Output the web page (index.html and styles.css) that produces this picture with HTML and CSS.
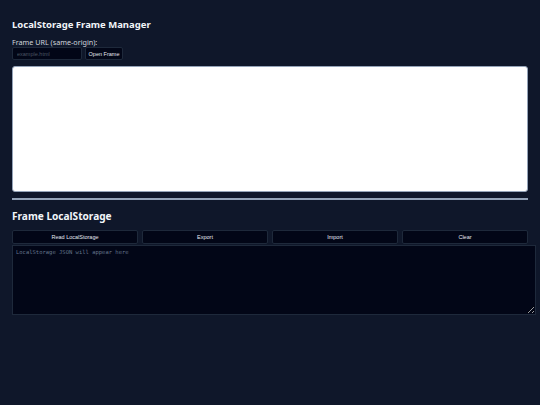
FILE: index.html
```html
<!DOCTYPE html>
<html>
<head>
<meta charset="utf-8">
<link rel="stylesheet" href="styles.css">
</head>
<body>
<div class="page">
  <h1 class="title">LocalStorage Frame Manager</h1>
  <label class="label" for="url">Frame URL (same-origin):</label>
  <div class="url-row">
    <input id="url" class="url-input" type="text" placeholder="example.html">
    <button class="btn btn-open">Open Frame</button>
  </div>
  <div class="frame"></div>
  <hr class="divider">
  <h2 class="subtitle">Frame LocalStorage</h2>
  <div class="actions">
    <button class="btn btn-action">Read LocalStorage</button>
    <button class="btn btn-action">Export</button>
    <button class="btn btn-action">Import</button>
    <button class="btn btn-action">Clear</button>
  </div>
  <textarea class="output" placeholder="LocalStorage JSON will appear here"></textarea>
</div>
</body>
</html>
```
FILE: styles.css
```css
html, body {
  margin: 0;
  padding: 0;
  background: #0f172a;
  height: 100%;
}
body {
  font-family: "Noto Sans", sans-serif;
  color: #e2e8f0;
}
.page {
  padding: 12px 12px 0 12px;
  display: flex;
  flex-direction: column;
}
.title {
  margin: 5px 0 0 0;
  font-size: 9.5px;
  font-weight: 700;
  line-height: 15px;
  color: #f1f5f9;
}
.label {
  margin-top: 5px;
  font-size: 7.2px;
  line-height: 10px;
  color: #d1d5db;
}
.url-row {
  display: flex;
  gap: 3px;
  margin-top: 0;
}
.url-input {
  box-sizing: border-box;
  width: 70px;
  height: 13px;
  padding: 0 4px;
  margin: 0;
  background: #020617;
  border: 1px solid #1e293b;
  border-radius: 2px;
  color: #e2e8f0;
  font-family: "Liberation Sans", Arial, sans-serif;
  font-size: 5.5px;
  outline: none;
}
.url-input::placeholder {
  color: #4b5563;
}
.btn {
  box-sizing: border-box;
  margin: 0;
  background: #020617;
  border: 1px solid #1e293b;
  border-radius: 2px;
  color: #e2e8f0;
  font-family: "Liberation Sans", Arial, sans-serif;
  font-size: 5.5px;
  padding: 0;
  cursor: pointer;
}
.btn-open {
  width: 38px;
  height: 13px;
}
.frame {
  margin-top: 6px;
  height: 126px;
  background: #ffffff;
  border: 1px solid #94a3b8;
  border-radius: 3px;
  box-sizing: border-box;
}
.divider {
  margin: 6px 0 0 0;
  border: none;
  height: 2px;
  background: #94a3b8;
}
.subtitle {
  margin: 8px 0 0 0;
  font-size: 10.1px;
  font-weight: 700;
  line-height: 16px;
  color: #f1f5f9;
}
.actions {
  margin-top: 6px;
  display: grid;
  grid-template-columns: repeat(4, 1fr);
  gap: 4px;
}
.btn-action {
  height: 14px;
}
.output {
  box-sizing: border-box;
  width: 524px;
  height: 70px;
  margin: 1px 0 0 0;
  padding: 3px 3px;
  background: #020617;
  border: 1px solid #1e293b;
  border-radius: 0;
  color: #e2e8f0;
  font-family: "DejaVu Sans Mono", monospace;
  font-size: 5.5px;
  outline: none;
}
.output::placeholder {
  color: #64748b;
}
```
